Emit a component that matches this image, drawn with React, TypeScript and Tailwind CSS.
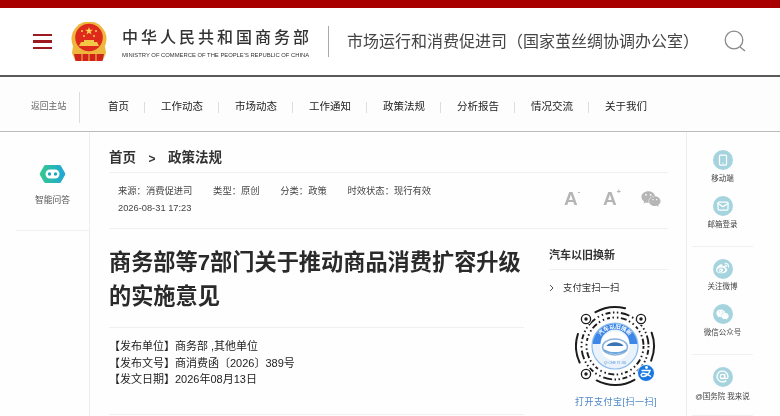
import { FaWeibo, FaWeixin } from "react-icons/fa";
import { Smartphone, Mail, AtSign } from "lucide-react";
import type { ReactNode } from "react";

const font = { fontFamily: '"Liberation Sans","Noto Sans CJK SC",sans-serif' };

function Emblem() {
  return (
    <svg width="36" height="39" viewBox="0 0 36 39">
      <circle cx="18" cy="17" r="17.500" fill="#eeb63c" />
      <circle cx="18" cy="15.500" r="13.800" fill="#de2a1c" />
      <path d="M18 5l1 2.800h3l-2.400 1.800.9 2.900-2.500-1.800-2.500 1.800.9-2.900-2.400-1.800h3z" fill="#f8d24e" />
      <circle cx="11" cy="9" r="1" fill="#f8d24e" />
      <circle cx="25" cy="9" r="1" fill="#f8d24e" />
      <circle cx="13" cy="14" r="1" fill="#f8d24e" />
      <circle cx="23" cy="14" r="1" fill="#f8d24e" />
      <path d="M8 24h20l-2-4H10z" fill="#f4c846" />
      <rect x="13" y="18" width="10" height="2.500" fill="#f4c846" />
      <path d="M2 24c3 5 9 8 16 8s13-3 16-8l1 7-3 7H4l-3-7z" fill="#eeb63c" />
      <path d="M3 32h30l-1.500 7H4.500z" fill="#cf231b" />
      <path d="M11 32v7M18 32v7M25 32v7" stroke="#f4c846" strokeWidth="1" />
    </svg>
  );
}

function Bot() {
  return (
    <svg width="27" height="20" viewBox="0 0 27 20">
      <defs>
        <linearGradient id="botg" x1="0" y1="0" x2="1" y2="0">
          <stop offset="0" stopColor="#35c98c" />
          <stop offset="1" stopColor="#1fa6d8" />
        </linearGradient>
      </defs>
      <path d="M6.500 1h14q1 0 1.500 1l4 7q.6 1 0 2l-4 7q-.5 1-1.500 1h-14q-1 0-1.500-1l-4-7q-.6-1 0-2l4-7q.5-1 1.500-1z" fill="url(#botg)" />
      <rect x="6.500" y="5.500" width="14" height="9" rx="4.500" fill="#fff" />
      <circle cx="10.500" cy="10" r="1.700" fill="#1fa6c8" />
      <circle cx="16.500" cy="10" r="1.700" fill="#1fa6c8" />
    </svg>
  );
}

function Finder({ x, y }: { x: number; y: number }) {
  return (
    <g>
      <circle cx={x} cy={y} r="6" fill="#fff" />
      <circle cx={x} cy={y} r="4.600" fill="none" stroke="#1c1c1c" strokeWidth="1.300" />
      <circle cx={x} cy={y} r="1.700" fill="#1c1c1c" />
    </g>
  );
}

const CX = 40;
const CY = 42;
function arc(a1: number, a2: number, r: number) {
  const p = (a: number) => {
    const t = ((a - 90) * Math.PI) / 180;
    return `${(CX + r * Math.cos(t)).toFixed(2)} ${(CY + r * Math.sin(t)).toFixed(2)}`;
  };
  return `M${p(a1)}A${r} ${r} 0 0 1 ${p(a2)}`;
}

function Qr() {
  return (
    <svg width="82" height="84" viewBox="0 0 82 84">
      <defs>
        <path id="qrarc" d={arc(-70, 70, 17.500)} />
      </defs>
      <g fill="none" stroke="#1c1c1c" strokeLinecap="round" strokeWidth="2">
        <path d={arc(-30, 15, 39)} />
        <path d={arc(245, 288, 39)} />
        <path d={arc(70, 112, 39)} />
        <path d={arc(150, 208, 39)} />
      </g>
      <g fill="none" stroke="#1c1c1c" strokeWidth="1.900">
        <circle cx={CX} cy={CY} r="33.500" strokeDasharray="1.500 2.500 5 2.500 1.500 2.500 1.500 2.500 9 3 1.500 3" />
        <circle cx={CX} cy={CY} r="28.500" strokeDasharray="3 2.500 1.500 3 1.500 2.500 6 2.500 1.500 3 1.500 3" />
      </g>
      <circle cx={CX} cy={CY} r="24.500" fill="#fff" />
      <circle cx={CX} cy={CY} r="23" fill="#eaf3fb" stroke="#8dbcec" strokeWidth="1.200" />
      <path d={`${arc(-85, 85, 22.500)}L${(CX + 14.500).toFixed(1)} ${CY - 2}A14.500 14.500 0 0 0 ${CX - 14.500} ${CY - 2}z`} fill="#3f87e6" />
      <text fontSize="5.500" fontWeight="bold" fill="#fff" textAnchor="middle" style={font}>
        <textPath href="#qrarc" startOffset="50%">汽车以旧换新</textPath>
      </text>
      <circle cx={CX} cy={CY} r="14.500" fill="#fff" />
      <ellipse cx={CX} cy={CY + 1} rx="12.500" ry="8" fill="none" stroke="#8cb4dc" strokeWidth="1.600" />
      <path d="M31.500 42c3-5 14-5 17 0z" fill="#3c74b4" />
      <path d="M29 46c6 4 16 4 22 0" fill="none" stroke="#6fa8dc" strokeWidth="2" />
      <text x={CX} y="60" fontSize="3.500" fill="#5a96d8" textAnchor="middle" style={font}>QI CHE YI JIU</text>
      <Finder x={11} y={15} />
      <Finder x={66} y={15} />
      <Finder x={11} y={70} />
      <circle cx="71" cy="69" r="8.500" fill="#1677e5" stroke="#fff" strokeWidth="1" />
      <circle cx="71.500" cy="63.500" r="1.400" fill="#fff" />
      <path d="M66.500 66.500h8.500c-1 3.500-4 6-7 6-2 0-2.500-2-1-3 2-1 6 1 9 3" fill="none" stroke="#fff" strokeWidth="1.500" />
    </svg>
  );
}

function Side({ icon, label, extra = "", gap = "mt-[2.500px]" }: { icon: ReactNode; label: string; extra?: string; gap?: string }) {
  return (
    <div className={`flex flex-col items-center ${extra}`}>
      <div className="flex h-5 w-5 items-center justify-center rounded-full bg-[#a5d3de] text-white">{icon}</div>
      <div className={`${gap} whitespace-nowrap text-[7.500px] leading-[12px] text-[#444]`}>{label}</div>
    </div>
  );
}

const nav = ["工作动态", "市场动态", "工作通知", "政策法规", "分析报告", "情况交流", "关于我们"];

export default function App() {
  return (
    <div className="flex h-[416px] w-[780px] flex-col overflow-hidden bg-[#fefefe] text-[#333] blur-[0.3px]" style={font}>
      <div className="h-2 shrink-0 bg-[#a80000]" />
      <header className="flex h-[69px] shrink-0 items-center border-b-2 border-[#5a5a5a] bg-white pl-[33px]">
        <div className="flex w-[19px] flex-col gap-[3.700px]">
          <div className="h-[2.700px] bg-[#9c1a1f]" />
          <div className="h-[2.700px] bg-[#9c1a1f]" />
          <div className="h-[2.700px] bg-[#9c1a1f]" />
        </div>
        <div className="ml-[19px] w-[36px]">
          <Emblem />
        </div>
        <div className="ml-[15px] mt-[3px] w-[188px]">
          <div className="whitespace-nowrap text-[16px] font-medium leading-[22px] tracking-[3px] text-[#333]">中华人民共和国商务部</div>
          <div className="mt-[2px] whitespace-nowrap text-[5.850px] leading-[8px] text-[#333]">MINISTRY OF COMMERCE OF THE PEOPLE'S REPUBLIC OF CHINA</div>
        </div>
        <div className="ml-[18px] h-[31px] w-px bg-[#aaa]" />
        <div className="ml-[18px] w-[360px] whitespace-nowrap text-[16px] text-[#444]">市场运行和消费促进司（国家茧丝绸协调办公室）</div>
        <svg className="ml-[17px]" width="23" height="23" viewBox="0 0 23 23" fill="none" stroke="#8a8a8a">
          <circle cx="10" cy="10" r="8.800" strokeWidth="1.300" />
          <path d="M16 17l5 4" strokeWidth="1.500" />
        </svg>
      </header>

      <nav className="flex h-[55px] shrink-0 items-center border-b border-[#bbb] bg-[#fdfdfd] pl-[31px] pt-[6px]">
        <span className="w-[48px] whitespace-nowrap text-[8.800px] text-[#666]">返回主站</span>
        <div className="h-[31px] w-px bg-[#ddd]" />
        <span className="ml-[28px] w-[36px] whitespace-nowrap text-[10.500px] text-[#222]">首页</span>
        {nav.map((n) => (
          <div key={n} className="flex w-[74px] items-center">
            <div className="h-[11px] w-px bg-[#ddd]" />
            <span className="ml-[16px] whitespace-nowrap text-[10.500px] text-[#222]">{n}</span>
          </div>
        ))}
      </nav>

      <main className="flex min-h-0 flex-1">
        <aside className="w-[90px] shrink-0 border-r border-[#eee]">
          <div className="ml-[16px] flex h-[99px] flex-col items-center border-b border-[#f0f0f0]">
            <div className="mt-[32px]"><Bot /></div>
            <div className="mt-[10px] whitespace-nowrap text-[8.800px] text-[#555]">智能问答</div>
          </div>
        </aside>

        <section className="min-w-0 flex-1 pl-[19px] pr-[18px]">
          <div className="flex h-[41px] items-center gap-[12.500px] border-b border-[#f0f0f0] pt-[13px] text-[13.500px] font-bold text-[#333]">
            <span>首页</span>
            <span className="text-[12px] font-bold">&gt;</span>
            <span>政策法规</span>
          </div>
          <div className="flex h-[56px] items-start border-b border-[#f0f0f0] pl-[9px]">
            <div className="w-[450px] pt-[9.500px] text-[9.300px] leading-[17px] text-[#444]">
              <div className="flex gap-[20.700px] whitespace-nowrap">
                <span>来源：消费促进司</span>
                <span>类型：原创</span>
                <span>分类：政策</span>
                <span>时效状态：现行有效</span>
              </div>
              <div>2026-08-31 17:23</div>
            </div>
            <div className="flex items-start pt-[14px] text-[#b5b5b5]">
              <span className="ml-[-4px] flex w-[39px] text-[19px] font-bold leading-[24px]">A<span className="text-[7px] leading-[10px]">-</span></span>
              <span className="flex w-[38px] text-[19px] font-bold leading-[24px]">A<span className="text-[7px] leading-[10px]">+</span></span>
              <FaWeixin className="mt-[2px] h-[20px] w-[20px]" />
            </div>
          </div>
          <div className="flex">
            <article className="w-[415px] shrink-0">
              <h1 className="border-b border-[#f0f0f0] pb-[13.500px] pt-[16.500px] text-[22.200px] font-bold leading-[34px] text-[#2a2a2a]">
                商务部等7部门关于推动商品消费扩容升级的实施意见
              </h1>
              <div className="border-b border-[#f0f0f0] pb-[26px] pt-[10px] text-[11px] leading-[16.500px] text-[#222]">
                <div>【发布单位】商务部 ,其他单位</div>
                <div>【发布文号】商消费函〔2026〕389号</div>
                <div>【发文日期】2026年08月13日</div>
              </div>
            </article>
            <div className="ml-[25px] flex w-[119px] shrink-0 flex-col">
              <div className="h-[41px] border-b border-[#f0f0f0] pt-[18px] text-[11px] font-bold leading-[16px] text-[#333]">汽车以旧换新</div>
              <div className="mt-[11px] flex items-center text-[9.400px] leading-[14px] text-[#333]">
                <svg width="5" height="8" viewBox="0 0 5 8" fill="none" stroke="#555" strokeWidth="1"><path d="M1 1l3 3-3 3" /></svg>
                <span className="ml-[9px]">支付宝扫一扫</span>
              </div>
              <div className="ml-[26px] mt-[9px]"><Qr /></div>
              <div className="ml-[26px] mt-[7px] whitespace-nowrap text-[9px] leading-[14px] tracking-[0.500px] text-[#4b86c5]">打开支付宝[扫一扫]</div>
            </div>
          </div>
        </section>

        <aside className="w-[94px] shrink-0 border-l border-[#eee] pl-[5px] pr-[27px]">
          <div className="flex flex-col border-b border-[#f0f0f0] pb-[15px] pt-[18px]">
            <Side icon={<Smartphone size={12} strokeWidth={2.500} />} label="移动端" />
            <Side icon={<Mail size={12} strokeWidth={2.500} />} label="邮箱登录" extra="mt-[11.500px]" />
          </div>
          <div className="flex flex-col border-b border-[#f0f0f0] pb-[15px] pt-[12px]">
            <Side icon={<FaWeibo size={13} />} label="关注微博" />
            <Side icon={<FaWeixin size={13} />} label="微信公众号" extra="mt-[11px]" />
          </div>
          <div className="flex flex-col border-b border-[#f0f0f0] pb-[12px] pt-[12px]">
            <Side icon={<AtSign size={13} strokeWidth={2.500} />} label="@国务院 我来说" gap="mt-[4px]" />
          </div>
        </aside>
      </main>
    </div>
  );
}
